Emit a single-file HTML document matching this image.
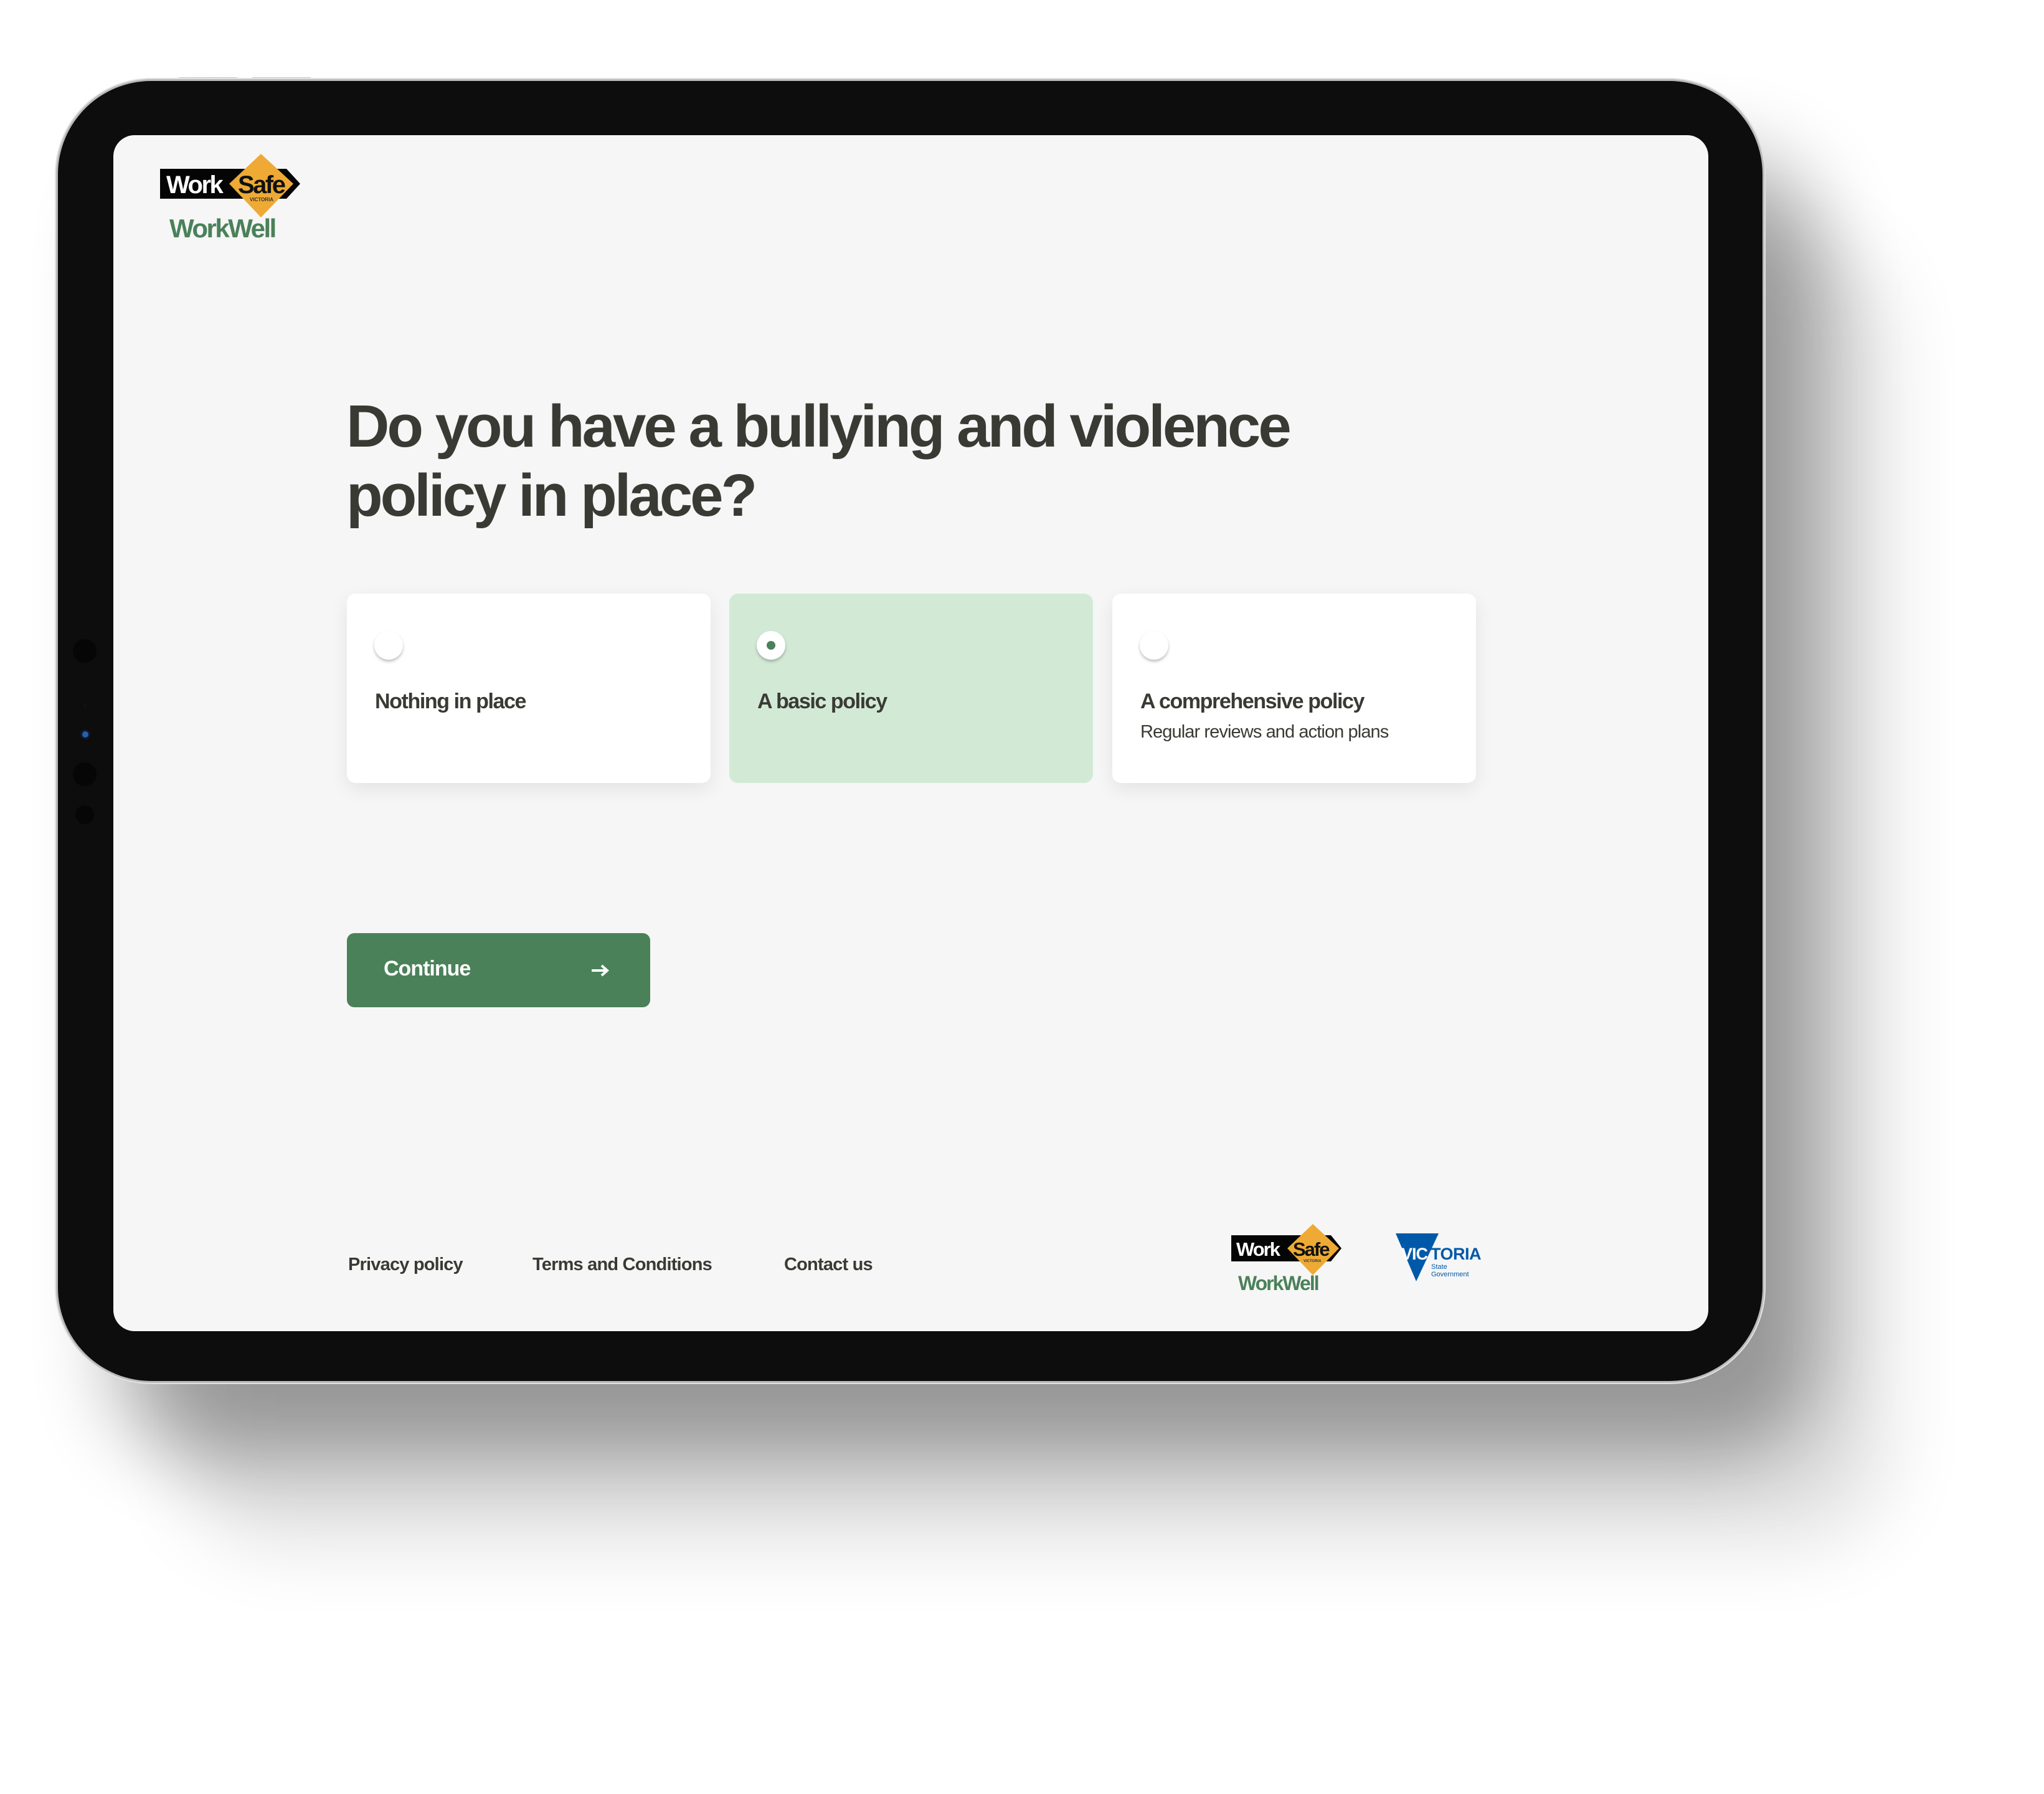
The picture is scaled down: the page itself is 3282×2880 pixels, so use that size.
<!DOCTYPE html>
<html><head><meta charset="utf-8">
<style>
*{margin:0;padding:0;box-sizing:border-box}
html,body{width:3282px;height:2880px;background:#fff;overflow:hidden;font-family:"Liberation Sans",Arial,sans-serif}
.dev{position:absolute;left:93px;top:130px;width:2737px;height:2087px;border-radius:150px;background:#0d0d0d;
 box-shadow:0 0 0 3px #b9b9bb,0 0 0 5px #e2e2e4, 90px 120px 160px rgba(0,0,0,.33), 200px 260px 300px rgba(0,0,0,.12)}
.btn{position:absolute;top:124px;height:8px;background:#c9c9cb;border-radius:4px 4px 0 0}
.scr{position:absolute;left:182px;top:217px;width:2561px;height:1920px;border-radius:34px;background:#f6f6f6;overflow:hidden}
.dot{position:absolute;border-radius:50%;background:#080808}
.abs{position:absolute}
h1{position:absolute;left:374px;top:412px;font-size:96px;line-height:111px;font-weight:700;color:#3a3a35;letter-spacing:-4px;white-space:nowrap}
.card{position:absolute;top:736px;width:584px;height:304px;border-radius:14px;background:#fff;box-shadow:0 10px 30px rgba(0,0,0,.08)}
.card.sel{background:#d2ead5;box-shadow:none}
.radio{position:absolute;left:44px;top:60px;width:46px;height:46px;border-radius:50%;background:#fff;box-shadow:0 3px 5px rgba(0,0,0,.25)}
.radio i{position:absolute;left:16px;top:16px;width:14px;height:14px;border-radius:50%;background:#4a8159}
.lbl{position:absolute;left:45px;top:154px;font-size:34px;font-weight:700;color:#3a3a35;letter-spacing:-1.4px;white-space:nowrap}
.sub{position:absolute;left:45px;top:206px;font-size:29px;color:#3a3a35;letter-spacing:-0.9px;white-space:nowrap}
.cont{position:absolute;left:375px;top:1281px;width:487px;height:119px;border-radius:12px;background:#4a8159}
.cont span{position:absolute;left:59px;top:38px;font-size:34px;font-weight:700;color:#fff;letter-spacing:-1px}
.foot{position:absolute;top:1797px;font-size:29px;font-weight:700;color:#3a3a35;letter-spacing:-0.8px;white-space:nowrap}
</style></head><body>
<div class="btn" style="left:285px;width:98px"></div>
<div class="btn" style="left:403px;width:98px"></div>
<div class="dev">
 <div class="dot" style="left:24px;top:896px;width:38px;height:38px;background:#060606"></div>
 <div class="dot" style="left:41px;top:1000px;width:6px;height:6px;background:#111"></div>
 <div class="dot" style="left:36px;top:1041px;width:16px;height:16px;background:#2a5ea8;border:3px solid #0b1a30"></div>
 <div class="dot" style="left:24px;top:1094px;width:38px;height:38px;background:#060606"></div>
 <div class="dot" style="left:28px;top:1163px;width:30px;height:30px;background:#060606"></div>
</div>
<div class="scr">
 <svg class="abs" style="left:70px;top:26px" width="240" height="140" viewBox="0 0 240 140">
  <path d="M5 28 H208 L230 52 L208 76 H5 Z" fill="#050505"/>
  <path d="M167 4 L219 52 L167 106 L116 52 Z" fill="#eeaa35"/>
  <text x="15" y="67" font-family="Liberation Sans" font-size="40" font-weight="700" fill="#fff" letter-spacing="-2.5">Work</text>
  <text x="130" y="67" font-family="Liberation Sans" font-size="40" font-weight="700" fill="#111" letter-spacing="-2.5">Safe</text>
  <text x="149" y="80" font-family="Liberation Sans" font-size="8" font-weight="700" fill="#333">VICTORIA</text>
  <text x="20" y="138" font-family="Liberation Sans" font-size="42" font-weight="700" fill="#4a8159" letter-spacing="-2.5">WorkWell</text>
 </svg>
 <h1>Do you have a bullying and violence<br>policy in place?</h1>
 <div class="card" style="left:375px"><div class="radio"></div><div class="lbl">Nothing in place</div></div>
 <div class="card sel" style="left:989px"><div class="radio"><i></i></div><div class="lbl">A basic policy</div></div>
 <div class="card" style="left:1604px"><div class="radio"></div><div class="lbl">A comprehensive policy</div><div class="sub">Regular reviews and action plans</div></div>
 <div class="cont"><span>Continue</span>
  <svg class="abs" style="left:391px;top:48px" width="32" height="24" viewBox="0 0 32 24"><path d="M2 12 H27 M18 4 L27 12 L18 20" stroke="#fff" stroke-width="4" fill="none"/></svg>
 </div>
 <div class="foot" style="left:377px">Privacy policy</div>
 <div class="foot" style="left:673px">Terms and Conditions</div>
 <div class="foot" style="left:1077px">Contact us</div>
 <svg class="abs" style="left:1790px;top:1745px" width="200" height="112" viewBox="0 0 200 112">
  <path d="M5 21 H165 L182 42 L165 63 H5 Z" fill="#050505"/>
  <path d="M136 3 L178 42 L136 85 L95 42 Z" fill="#eeaa35"/>
  <text x="13" y="54" font-family="Liberation Sans" font-size="31" font-weight="700" fill="#fff" letter-spacing="-2">Work</text>
  <text x="104" y="54" font-family="Liberation Sans" font-size="31" font-weight="700" fill="#111" letter-spacing="-2">Safe</text>
  <text x="121" y="64" font-family="Liberation Sans" font-size="6" font-weight="700" fill="#333">VICTORIA</text>
  <text x="16" y="109" font-family="Liberation Sans" font-size="32" font-weight="700" fill="#4a8159" letter-spacing="-2">WorkWell</text>
 </svg>
 <svg class="abs" style="left:2055px;top:1760px" width="150" height="84" viewBox="0 0 150 84">
  <path d="M4 3 H73 L37 80 Z" fill="#0059a8"/>
  <text x="13" y="45" font-family="Liberation Sans" font-size="27" font-weight="700" fill="#fff" letter-spacing="-1">VIC</text>
  <text x="60" y="45" font-family="Liberation Sans" font-size="27" font-weight="700" fill="#0059a8" letter-spacing="-0.5">TORIA</text>
  <text x="61" y="60" font-family="Liberation Sans" font-size="11" fill="#0059a8">State</text>
  <text x="61" y="72" font-family="Liberation Sans" font-size="11" fill="#0059a8">Government</text>
 </svg>
</div>
</body></html>
